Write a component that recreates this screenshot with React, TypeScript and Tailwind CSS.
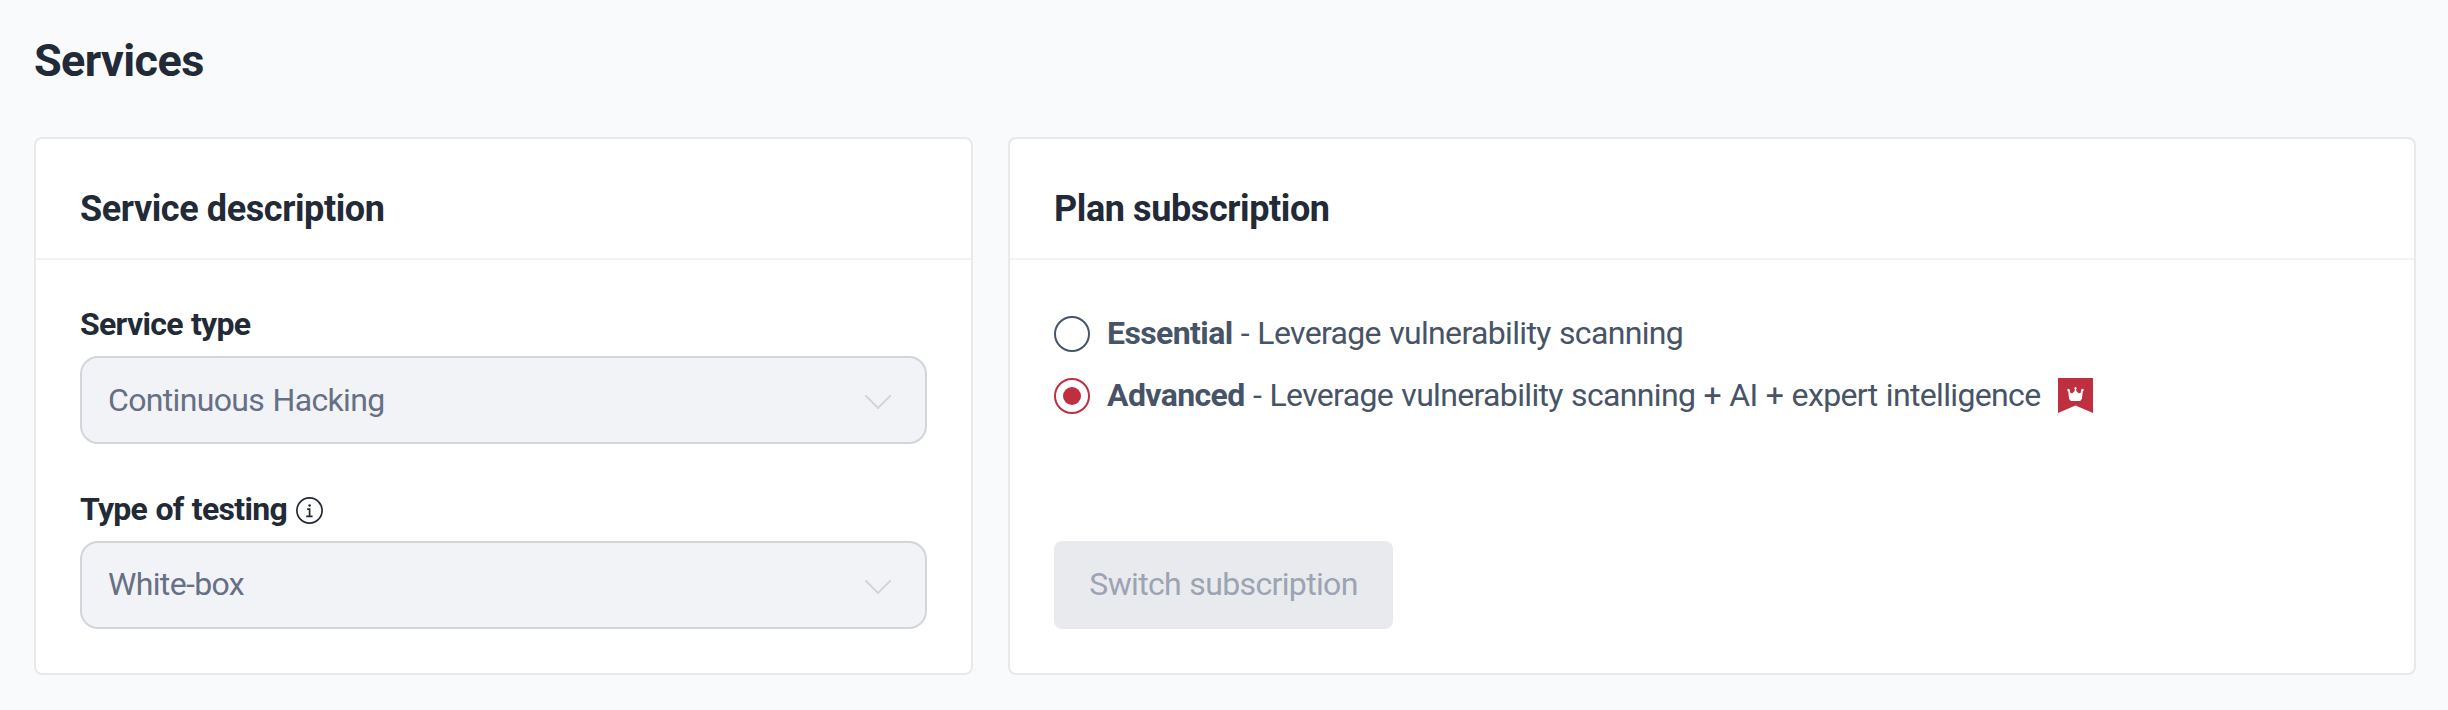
import type { ReactNode } from 'react';

interface CardProps {
  title: string;
  className?: string;
  children: ReactNode;
}

function Card({ title, className = '', children }: CardProps) {
  return (
    <section
      className={`flex h-[538px] shrink-0 flex-col rounded-lg border-2 border-[#e9e9ed] bg-white ${className}`}
    >
      <h2 className="h-[121px] shrink-0 border-b-2 border-[#f2f3f7] px-11 pt-[46px] text-[36px] leading-[48px] font-bold tracking-[-0.4px] text-[#212a36]">
        {title}
      </h2>
      {children}
    </section>
  );
}

function InfoIcon() {
  return (
    <svg className="mt-0.5 h-[27px] w-[27px]" viewBox="0 0 27 27" fill="none" stroke="currentColor">
      <circle cx="13.5" cy="13.5" r="12.6" strokeWidth="1.7" />
      <path d="M11.2 12.2h2.4v7M10.2 19.4h6.4" strokeWidth="1.7" />
      <circle cx="13.6" cy="8.5" r="1.3" fill="currentColor" stroke="none" />
    </svg>
  );
}

interface SelectFieldProps {
  label: string;
  value: string;
  info?: boolean;
  valueClassName?: string;
}

function SelectField({ label, value, info = false, valueClassName = '' }: SelectFieldProps) {
  return (
    <div>
      <div className="flex h-12 items-center gap-[9px] text-[32px] leading-[48px] font-bold tracking-[-0.7px] text-[#212a36] [word-spacing:1px]">
        <span>{label}</span>
        {info && <InfoIcon />}
      </div>
      <div className="mt-2 flex h-[88px] items-center justify-between rounded-[18px] border-2 border-[#d2d5db] bg-[#f2f3f7] pr-[34px] pl-[26px] text-[32px] tracking-[-0.65px] text-[#667085] [word-spacing:1px]">
        <span className={valueClassName}>{value}</span>
        <svg className="mt-1 h-[14px] w-[26px]" viewBox="0 0 26 14" fill="none">
          <path
            d="M1 1l12 12L25 1"
            stroke="#d3d5da"
            strokeWidth="2"
            strokeLinecap="round"
            strokeLinejoin="round"
          />
        </svg>
      </div>
    </div>
  );
}

interface PlanOptionProps {
  name: string;
  description: string;
  checked?: boolean;
  children?: ReactNode;
}

function PlanOption({ name, description, checked = false, children }: PlanOptionProps) {
  return (
    <label className="flex h-12 items-center text-[32px] leading-[48px] tracking-[-0.66px] text-[#475467] [word-spacing:1px]">
      <span
        className={`mr-[17px] flex h-9 w-9 items-center justify-center rounded-full border-2 ${
          checked ? 'border-[#bf2f40]' : 'border-[#475467]'
        }`}
      >
        {checked && <span className="h-[18px] w-[18px] rounded-full bg-[#bf2f40]" />}
      </span>
      <span className="pb-0.5">
        <b className="tracking-[-0.6px]">{name}</b> - {description}
      </span>
      {children}
    </label>
  );
}

function CrownRibbon() {
  return (
    <svg className="mb-px ml-[18px] h-[35px] w-[35px]" viewBox="0 0 35 35">
      <path d="M0 0h35v35l-17.5-7.5L0 35z" fill="#bf2f40" />
      <path
        d="M9 12l1.2-1.2 1.7.8.2 3 2 .9 2.4-2.2.5-1.8-.9-1.3 1.4-1.4 1.4 1.4-.9 1.300.5 1.800 2.400 2.200 2-.9.2-3 1.700-.8L26 12l-1.300 1.800-.8 7.200-1.800 2h-9.200l-1.800-2-.8-7.200z"
        fill="#fff"
      />
    </svg>
  );
}

export default function App() {
  return (
    <main className="h-[710px] w-[2448px] bg-[#f9fafc] pt-[30px] pr-8 pl-[34px] font-[Roboto,sans-serif]">
      <h1 className="text-[45px] leading-[62px] font-bold tracking-[-0.6px] text-[#212a36]">
        Services
      </h1>
      <div className="mt-[45px] flex gap-[35px]">
        <Card title="Service description" className="w-[939px]">
          <div className="flex flex-col gap-[41px] px-11 pt-10">
            <SelectField label="Service type" value="Continuous Hacking" />
            <SelectField
              label="Type of testing"
              value="White-box"
              valueClassName="pb-0.5"
              info
            />
          </div>
        </Card>
        <Card title="Plan subscription" className="w-[1408px]">
          <div className="flex grow flex-col px-11 pt-[50px] pb-11">
            <div className="flex flex-col gap-[14px]">
              <PlanOption name="Essential" description="Leverage vulnerability scanning" />
              <PlanOption
                name="Advanced"
                description="Leverage vulnerability scanning + AI + expert intelligence"
                checked
              >
                <CrownRibbon />
              </PlanOption>
            </div>
            <button
              type="button"
              disabled
              className="mt-auto h-[88px] w-[339px] rounded-lg bg-[#e9eaee] pb-0.5 text-[32px] tracking-[-0.65px] text-[#9ca4b3] [word-spacing:1px]"
            >
              Switch subscription
            </button>
          </div>
        </Card>
      </div>
    </main>
  );
}
